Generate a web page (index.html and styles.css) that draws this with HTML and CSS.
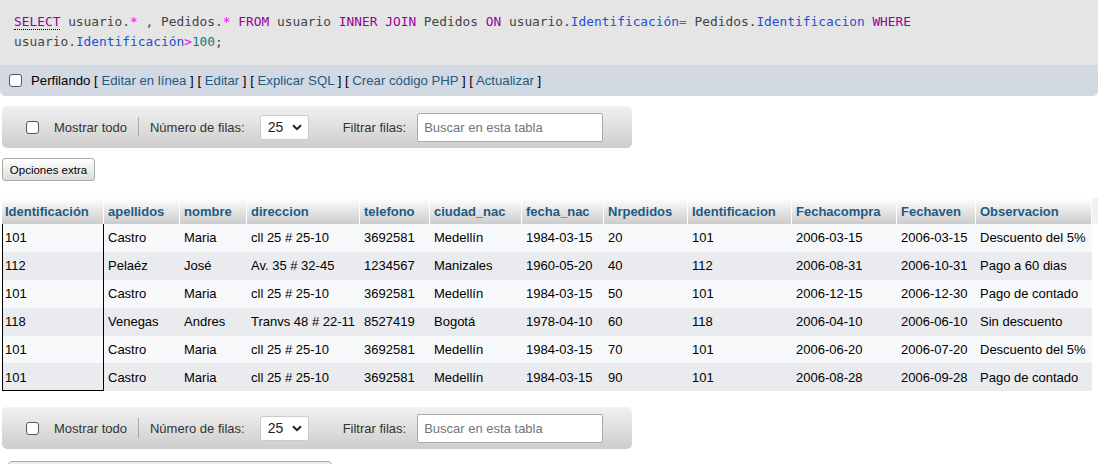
FILE: index.html
```html
<!DOCTYPE html>
<html lang="es">
<head>
<meta charset="utf-8">
<title>Resultado de consulta</title>
<link rel="stylesheet" href="styles.css">
</head>
<body>
<div class="sqlblock">
  <div class="sql"><a class="doc" href="#">SELECT</a> usuario.<span class="op">*</span> , Pedidos.<span class="op">*</span> <span class="kw">FROM</span> usuario <span class="kw">INNER JOIN</span> Pedidos <span class="kw">ON</span> usuario.<span class="col">Identificación</span><span class="op">=</span> Pedidos.<span class="col">Identificacion</span> <span class="kw">WHERE</span> usuario.<span class="col">Identificación</span><span class="op">&gt;</span><span class="num">100</span>;</div>
  <div class="profiling">
    <input type="checkbox" class="cb">
    <span class="ptext">Perfilando [ <a href="#">Editar en línea</a> ] [ <a href="#">Editar</a> ] [ <a href="#">Explicar SQL</a> ] [ <a href="#">Crear código PHP</a> ] [ <a href="#">Actualizar</a> ]</span>
  </div>
</div>

<div class="navbar">
  <input type="checkbox" class="cb">
  <span class="lbl show">Mostrar todo</span>
  <span class="sep"></span>
  <span class="lbl">Número de filas:</span>
  <span class="select">25<svg class="chev" width="10" height="7" viewBox="0 0 10 7"><path d="M1 1.2 5 5.2 9 1.2" fill="none" stroke="#222" stroke-width="2"/></svg></span>
  <span class="lbl filt">Filtrar filas:</span>
  <span class="search">Buscar en esta tabla</span>
</div>

<button class="extra">Opciones extra</button>

<table class="data">
  <colgroup>
    <col class="w1"><col class="w2"><col class="w3"><col class="w4"><col class="w5"><col class="w6"><col class="w7"><col class="w8"><col class="w9"><col class="w10"><col class="w11"><col class="w12"><col class="w13">
  </colgroup>
  <thead>
    <tr><th>Identificación</th><th>apellidos</th><th>nombre</th><th>direccion</th><th>telefono</th><th>ciudad_nac</th><th>fecha_nac</th><th>Nrpedidos</th><th>Identificacion</th><th>Fechacompra</th><th>Fechaven</th><th>Observacion</th><th class="filler"></th></tr>
  </thead>
  <tbody>
    <tr class="odd"><td>101</td><td>Castro</td><td>Maria</td><td>cll 25 # 25-10</td><td>3692581</td><td>Medellín</td><td>1984-03-15</td><td>20</td><td>101</td><td>2006-03-15</td><td>2006-03-15</td><td>Descuento del 5%</td><td class="filler"></td></tr>
    <tr class="even"><td>112</td><td>Pelaéz</td><td>José</td><td>Av. 35 # 32-45</td><td>1234567</td><td>Manizales</td><td>1960-05-20</td><td>40</td><td>112</td><td>2006-08-31</td><td>2006-10-31</td><td>Pago a 60 dias</td><td class="filler"></td></tr>
    <tr class="odd"><td>101</td><td>Castro</td><td>Maria</td><td>cll 25 # 25-10</td><td>3692581</td><td>Medellín</td><td>1984-03-15</td><td>50</td><td>101</td><td>2006-12-15</td><td>2006-12-30</td><td>Pago de contado</td><td class="filler"></td></tr>
    <tr class="even"><td>118</td><td>Venegas</td><td>Andres</td><td>Tranvs 48 # 22-11</td><td>8527419</td><td>Bogotá</td><td>1978-04-10</td><td>60</td><td>118</td><td>2006-04-10</td><td>2006-06-10</td><td>Sin descuento</td><td class="filler"></td></tr>
    <tr class="odd"><td>101</td><td>Castro</td><td>Maria</td><td>cll 25 # 25-10</td><td>3692581</td><td>Medellín</td><td>1984-03-15</td><td>70</td><td>101</td><td>2006-06-20</td><td>2006-07-20</td><td>Descuento del 5%</td><td class="filler"></td></tr>
    <tr class="even last"><td>101</td><td>Castro</td><td>Maria</td><td>cll 25 # 25-10</td><td>3692581</td><td>Medellín</td><td>1984-03-15</td><td>90</td><td>101</td><td>2006-08-28</td><td>2006-09-28</td><td>Pago de contado</td><td class="filler"></td></tr>
  </tbody>
</table>

<div class="navbar bottom">
  <input type="checkbox" class="cb">
  <span class="lbl show">Mostrar todo</span>
  <span class="sep"></span>
  <span class="lbl">Número de filas:</span>
  <span class="select">25<svg class="chev" width="10" height="7" viewBox="0 0 10 7"><path d="M1 1.2 5 5.2 9 1.2" fill="none" stroke="#222" stroke-width="2"/></svg></span>
  <span class="lbl filt">Filtrar filas:</span>
  <span class="search">Buscar en esta tabla</span>
</div>

<div class="ops"></div>
</body>
</html>
```

FILE: styles.css
```css
* { box-sizing: border-box; }
html, body { margin: 0; padding: 0; }
body {
  width: 1098px;
  height: 464px;
  overflow: hidden;
  font-family: "Liberation Sans", Arial, sans-serif;
  font-size: 13px;
  color: #000;
  background: #fff;
}

/* SQL query block */
.sql {
  background: #e5e5e5;
  padding: 12px 14px 13px;
  font-family: "DejaVu Sans Mono", monospace;
  font-size: 12.85px;
  line-height: 20px;
  color: #444;
}
.sql .doc {
  color: #990099;
  text-decoration: none;
  border-bottom: 1px dotted #000;
}
.sql .kw { color: #990099; }
.sql .op { color: #ff00ff; }
.sql .col { color: #1f4fd6; }
.sql .num { color: #008080; }

.profiling {
  background: #d2d9e2;
  height: 31px;
  border-radius: 0 0 5px 5px;
  display: flex;
  align-items: center;
  padding-left: 9px;
  font-size: 13.2px;
}
.profiling .ptext { margin-left: 9px; }
.profiling a { color: #235a81; text-decoration: none; }

/* checkbox */
.cb {
  appearance: none;
  -webkit-appearance: none;
  width: 13px;
  height: 13px;
  margin: 0;
  border: 1px solid #555;
  border-radius: 3px;
  background: #fff;
  flex: none;
}

/* navigation bar */
.navbar {
  margin: 10px 0 0 2px;
  width: 630px;
  height: 42px;
  border-radius: 5px;
  background: linear-gradient(#f1f1f1, #cdcdcd);
  display: flex;
  align-items: center;
  padding-left: 24px;
  color: #333;
}
.navbar.bottom { margin-top: 16px; }
.navbar .show { margin-left: 15px; }
.navbar .sep {
  width: 1px;
  height: 20px;
  background: #aaa;
  margin: 0 11px 0 11px;
}
.navbar .select {
  margin-left: 15px;
  width: 49px;
  height: 25px;
  background: #fff;
  border: 1px solid #ccc;
  border-radius: 3px;
  display: flex;
  align-items: center;
  justify-content: space-between;
  padding: 0 6px 0 7px;
  color: #222;
  font-size: 14px;
}
.navbar .filt { margin-left: 34px; }
.navbar .search {
  margin-left: 11px;
  width: 186px;
  height: 29px;
  background: #fff;
  border: 1px solid #aaa;
  border-radius: 2px;
  display: flex;
  align-items: center;
  padding-left: 6px;
  color: #757575;
}

/* extra options button */
.extra {
  display: block;
  margin: 10px 0 0 2px;
  width: 93px;
  height: 23px;
  padding: 0;
  font-family: "Liberation Sans", Arial, sans-serif;
  font-size: 11.5px;
  color: #000;
  background: linear-gradient(#fff, #dcdcdc);
  border: 1px solid #aaa;
  border-radius: 3px;
}

/* results table */
.data {
  margin: 17px 0 0 2px;
  border-collapse: separate;
  border-spacing: 0;
  table-layout: fixed;
  width: 1110px;
}
.w1 { width: 102px; }
.w2 { width: 76px; }
.w3 { width: 67px; }
.w4 { width: 113px; }
.w5 { width: 70px; }
.w6 { width: 92px; }
.w7 { width: 82px; }
.w8 { width: 84px; }
.w9 { width: 104px; }
.w10 { width: 105px; }
.w11 { width: 79px; }
.w12 { width: 116px; }
.w13 { width: 20px; }

.data th {
  height: 26px;
  padding: 0 3px 0 4px;
  text-align: left;
  font-weight: bold;
  color: #235a81;
  white-space: nowrap;
  overflow: hidden;
  background: linear-gradient(#fff, #ccc);
  box-shadow: inset -1px 0 #fff;
}
.data th:first-child { padding-left: 3px; }
.data th.filler { background: #f2f2f2; box-shadow: none; }

.data td {
  height: 27.9px;
  padding: 0 3px 0 4px;
  white-space: nowrap;
  overflow: hidden;
}
.data tr.odd td { background: #f7f8fa; }
.data tr.even td { background: #eaebee; }
.data td:first-child {
  padding-left: 3px;
  box-shadow: inset 1px 0 #000, inset -1px 0 #000;
}
.data tr.last td:first-child {
  box-shadow: inset 1px 0 #000, inset -1px 0 #000, inset 0 -1px #000;
}
.data tr td.filler { background: #fff; }

/* next section (cut off) */
.ops {
  margin: 12px 0 0 8px;
  width: 324px;
  height: 20px;
  border: 1px solid #aaa;
  border-radius: 4px 4px 0 0;
  background: #eee;
}
```
